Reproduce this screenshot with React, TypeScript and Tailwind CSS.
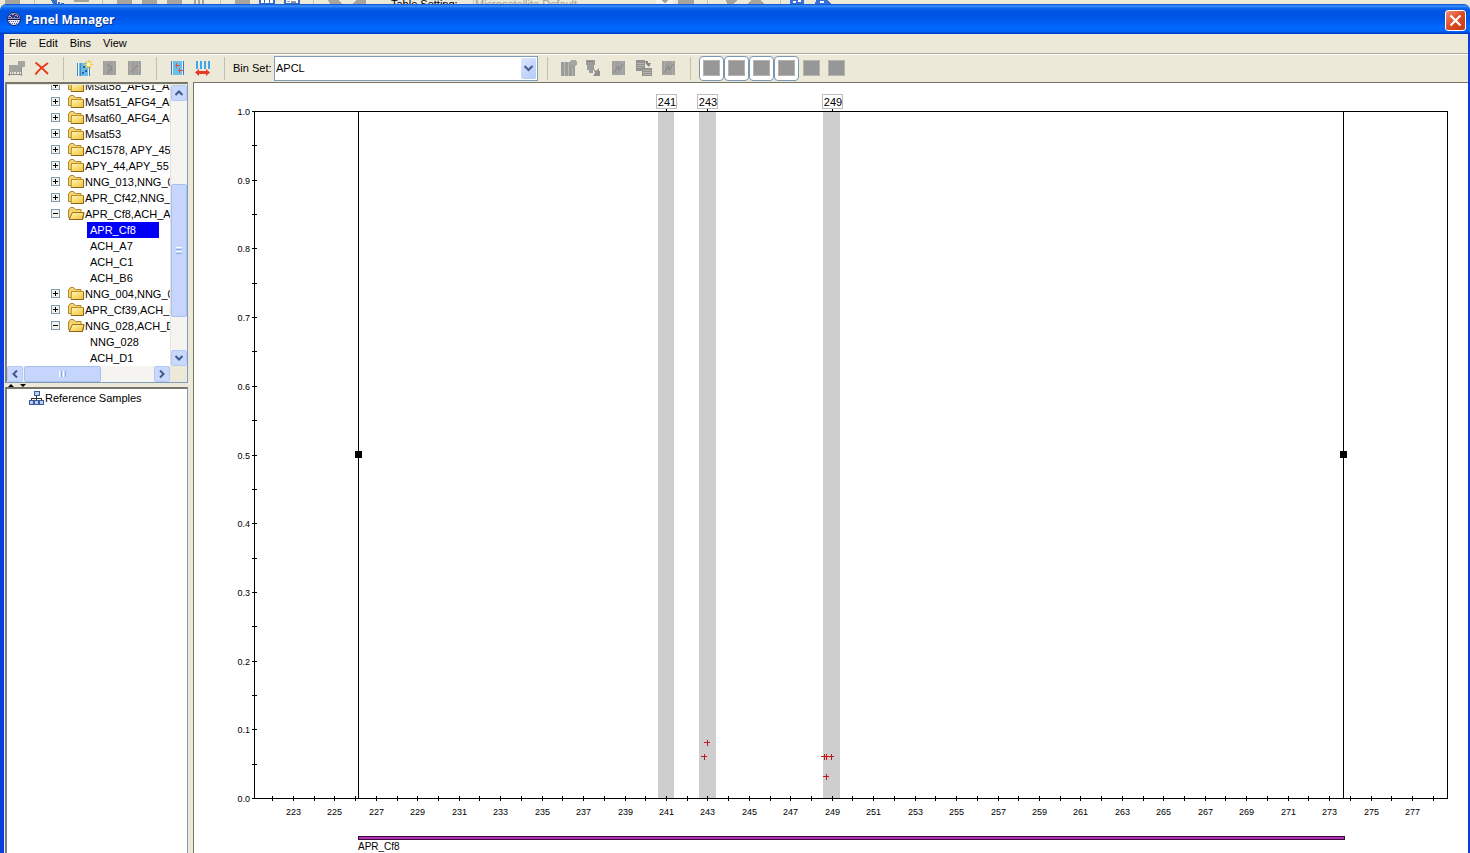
import React from "react";

type Node = { label: string; kind: "closed" | "open" | "leaf"; selected?: boolean };

const NODES: Node[] = [
  { label: "Msat58_AFG1_AFG2", kind: "closed" },
  { label: "Msat51_AFG4_AFG5", kind: "closed" },
  { label: "Msat60_AFG4_AFG5", kind: "closed" },
  { label: "Msat53", kind: "closed" },
  { label: "AC1578, APY_45", kind: "closed" },
  { label: "APY_44,APY_55", kind: "closed" },
  { label: "NNG_013,NNG_020", kind: "closed" },
  { label: "APR_Cf42,NNG_008", kind: "closed" },
  { label: "APR_Cf8,ACH_A7", kind: "open" },
  { label: "APR_Cf8", kind: "leaf", selected: true },
  { label: "ACH_A7", kind: "leaf" },
  { label: "ACH_C1", kind: "leaf" },
  { label: "ACH_B6", kind: "leaf" },
  { label: "NNG_004,NNG_006", kind: "closed" },
  { label: "APR_Cf39,ACH_D2", kind: "closed" },
  { label: "NNG_028,ACH_D1", kind: "open" },
  { label: "NNG_028", kind: "leaf" },
  { label: "ACH_D1", kind: "leaf" },
];

function Glyph({ children }: { children: React.ReactNode }) {
  return (
    <svg width="17" height="17" viewBox="0 0 17 17" className="shrink-0" shapeRendering="crispEdges" aria-hidden="true">
      {children}
    </svg>
  );
}

function Tool({ label, toggled, children }: { label: string; toggled?: boolean; children: React.ReactNode }) {
  return (
    <button
      aria-label={label}
      className={
        toggled
          ? "flex h-[25px] w-[25px] items-center justify-center rounded-[4px] border border-[#7a98af] bg-white"
          : "flex h-[25px] w-[25px] items-center justify-center"
      }
    >
      {children}
    </button>
  );
}

function Separator() {
  return (
    <div className="flex h-[23px] w-[18px] shrink-0 justify-center">
      <div className="w-px bg-[#c3bfae]" />
    </div>
  );
}

const Square = () => (
  <Glyph>
    <rect x="0" y="0" width="17" height="16" fill="#b4b3ae" />
    <rect x="1" y="1" width="15" height="14" fill="#979797" />
  </Glyph>
);

const GreyChart = ({ d }: { d: string }) => (
  <Glyph>
    <rect x="2" y="1" width="13" height="14" fill="#a0a09e" />
    <path d="M4.500 1v14M12.500 1v14" stroke="#adaca8" />
    <path d={d} stroke="#858585" fill="none" shapeRendering="auto" />
  </Glyph>
);

function Folder({ open }: { open: boolean }) {
  return (
    <svg width="17" height="16" viewBox="0 0 17 16" className="shrink-0" aria-hidden="true">
      <defs>
        <linearGradient id="folderFill" x1="0" y1="0" x2="1" y2="1">
          <stop offset="0" stopColor="#fffbb8" />
          <stop offset="1" stopColor="#f2bd35" />
        </linearGradient>
      </defs>
      <path d="M.500 11.500V4L2.500 1.500h3l2 2h5.500v8.500z" fill="#f5d36b" stroke="#b08428" />
      {open ? (
        <path d="M1 13.500L4.500 6.500H16L14.500 13.500z" fill="url(#folderFill)" stroke="#a07418" />
      ) : (
        <path d="M3.500 5.500H15.500V13.500H3z" fill="url(#folderFill)" stroke="#b98c2c" />
      )}
      <path d={open ? "M2 13.500H14.500L16 7" : "M3 13.500H15.500V6"} fill="none" stroke="#8a6418" />
    </svg>
  );
}

function Expander({ open }: { open: boolean }) {
  return (
    <svg width="9" height="9" viewBox="0 0 9 9" shapeRendering="crispEdges" className="mb-px shrink-0" aria-hidden="true">
      <rect x=".5" y=".5" width="8" height="8" fill="#f4f2ec" stroke="#7f9db0" />
      <path d={open ? "M2 4.500h5" : "M2 4.500h5M4.500 2v5"} stroke="#000" />
    </svg>
  );
}

function Tree() {
  return (
    <ul className="-mt-[7px] min-w-0 flex-1">
      {NODES.map((n) => (
        <li key={n.label + n.kind} className="flex h-4 items-center whitespace-nowrap">
          {n.kind === "leaf" ? (
            <button
              className={
                n.selected
                  ? "ml-20 h-4 w-[72px] bg-[#0000f8] pl-[3px] text-left text-white"
                  : "ml-20 h-4 w-[72px] pl-[3px] text-left"
              }
            >
              {n.label}
            </button>
          ) : (
            <button className="ml-11 flex h-4 items-center">
              <Expander open={n.kind === "open"} />
              <span className="ml-2 flex items-center">
                <Folder open={n.kind === "open"} />
                <span>{n.label}</span>
              </span>
            </button>
          )}
        </li>
      ))}
    </ul>
  );
}

function ScrollArrow({ label, d }: { label: string; d: string }) {
  return (
    <button
      aria-label={label}
      className="flex h-4 w-4 shrink-0 items-center justify-center rounded-[2px] border border-[#b4c8f6] bg-[#c9d8fc]"
    >
      <svg width="10" height="10" viewBox="0 0 10 10" aria-hidden="true">
        <path d={d} fill="none" stroke="#3f5a8a" strokeWidth="2" />
      </svg>
    </button>
  );
}

const SX = (v: number) => Math.round(99 + (v - 223) * 20.722) + 0.5;
const SY = (v: number) => Math.round(715 - v * 687) + 0.5;
const UNITS = Array.from({ length: 57 }, (_, i) => 222 + i);
const STEPS = Array.from({ length: 21 }, (_, i) => i / 20);
const BINS = [
  { name: "241", x: 464, w: 16, mid: 472.5 },
  { name: "243", x: 505, w: 17, mid: 513.5 },
  { name: "249", x: 629, w: 17, mid: 638.5 },
];
const PEAKS = [
  [513, 660],
  [510, 674],
  [630, 674],
  [632, 674],
  [637, 674],
  [632, 694],
];

function BinPlot() {
  return (
    <svg
      viewBox="0 0 1273 770"
      preserveAspectRatio="xMinYMin meet"
      className="block h-full w-full"
      role="img"
      aria-label="Bin plot for marker APR_Cf8"
    >
      <g shapeRendering="crispEdges">
        {BINS.map((b) => (
          <g key={b.name}>
            <rect x={b.x} y="28" width={b.w} height="687" fill="#cecece" />
            <path d={`M${b.mid} 26v3`} stroke="#000" />
            <rect x={b.mid - 10} y="11.500" width="20" height="14" fill="#fff" stroke="#bdbdbd" />
          </g>
        ))}
        <rect x="60.500" y="28.500" width="1193" height="687" fill="none" stroke="#000" />
        <path d="M164.500 28v687M1149.500 28v687" stroke="#000" />
        <rect x="161" y="368" width="7" height="7" />
        <rect x="1146" y="368" width="7" height="7" />
        {STEPS.map((s) => (
          <path key={s} d={`M58 ${SY(s)}h5`} stroke="#000" />
        ))}
        {UNITS.map((u) => (
          <path key={u} d={`M${SX(u)} 713v5`} stroke="#000" />
        ))}
        {PEAKS.map(([x, y]) => (
          <g key={`${x}-${y}`} fill="#c01818">
            <rect x={x - 3} y={y - 1} width="6" height="1" />
            <rect x={x - 0} y={y - 3} width="1" height="6" />
          </g>
        ))}
        <rect x="164.500" y="753.500" width="986" height="3" fill="#b432b4" stroke="#3c0a3c" />
      </g>
      <g fontSize="9" textAnchor="end">
        {STEPS.filter((_, i) => i % 2 === 0).map((s) => (
          <text key={s} x="56" y={SY(s) + 3}>
            {s.toFixed(1)}
          </text>
        ))}
      </g>
      <g fontSize="9" textAnchor="middle">
        {UNITS.filter((u) => u % 2 === 1).map((u) => (
          <text key={u} x={SX(u)} y="732">
            {u}
          </text>
        ))}
      </g>
      <g fontSize="11" textAnchor="middle">
        {BINS.map((b) => (
          <text key={b.name} x={b.mid + 0.5} y="23">
            {b.name}
          </text>
        ))}
      </g>
      <text x="164" y="767" fontSize="10">
        APR_Cf8
      </text>
    </svg>
  );
}

function BackgroundStrip() {
  return (
    <div className="flex h-1 shrink-0 overflow-hidden bg-[#ece9d8] leading-[8px]">
      <svg width="391" height="4" shapeRendering="crispEdges" className="shrink-0" aria-hidden="true">
        <path
          d="M5 0h15v4H5zM74 0h15v2H74zM117 0h15v4h-15zM142 0h15v4h-15zM167 0h15v4h-15zM194 0h2v4h-2zM198 0h2v4h-2zM202 0h2v4h-2zM235 0h15v4h-15zM328 0h10l4 4h-12zM352 4l4-4h10v4z"
          fill="#a5a49d"
        />
        <path d="M34 0h1v4h-1zM102 0h1v4h-1zM220 0h1v4h-1zM313 0h1v4h-1z" fill="#c3bfae" />
        <path d="M51 0h6v4h-4zM58 2h2v2h-2zM61 3h3v1h-3zM259 0h16v4h-16zM284 0h16v4h-16z" fill="#3a6fc8" />
        <path d="M261 0h3v3h-3zM265 0h4v3h-4zM270 0h3v3h-3zM286 0h12v3h-12z" fill="#fff" />
        <path d="M287 1h3v1h-3zM291 1h5v2h-5z" fill="#8899ad" />
      </svg>
      <span className="w-[82px] shrink-0">Table Setting:</span>
      <span className="w-[183px] shrink-0 border-l border-[#c9c7ba] pl-px text-[#a5a395]">Microsatellite Default</span>
      <svg width="190" height="4" shapeRendering="crispEdges" className="shrink-0" aria-hidden="true">
        <path d="M0 0h17v4H0z" fill="#f5f4ee" />
        <path d="M5 0l4 3l4-3M22 0h16v4H22zM70 0h11l-3 4h-7zM95 0h10l3 4H92z" fill="#a5a49d" />
        <path d="M51 0h1v4h-1zM124 0h1v4h-1z" fill="#c3bfae" />
        <path d="M134 0h14v4h-14zM160 0h12l3 4h-16z" fill="#3a6fd8" />
        <path d="M137 1h3v2h-3zM142 0h3v2h-3zM164 1h4v2h-4z" fill="#fff" />
      </svg>
    </div>
  );
}

export default function App() {
  return (
    <div className="flex h-screen flex-col overflow-hidden bg-[#ece9d8] font-['Liberation_Sans',Arial,sans-serif] text-[11px] leading-4 text-black">
      <BackgroundStrip />
      <div className="flex min-h-0 flex-1 flex-col">
        <header className="flex h-[30px] shrink-0 items-center rounded-t-[6px] bg-[linear-gradient(#0a48c8_0px,#3b93ff_2px,#1268ee_4px,#0054e3_7px,#0056e8_15px,#0068ff_23px,#0066fc_27px,#0038b8_30px)] pr-1 pl-[7px]">
          <svg width="14" height="14" viewBox="0 0 14 14" aria-hidden="true">
            <circle cx="7" cy="7" r="6.500" fill="#e8ecf8" stroke="#17205c" />
            <path d="M1 6.500C2 3 4 1.500 7 1.500S12 3 13 6.500z" fill="#26357e" />
            <path d="M2 4.500h2M5 2.500h2M8 3.500h2M10 4.500h1M4 5.500h1M7 5.500h1" stroke="#c8a0c8" />
            <path d="M1 7.500h12" stroke="#101a50" />
            <path d="M2 9.500h10M3 11.500h8" stroke="#5866a8" strokeDasharray="1 1" />
          </svg>
          <h1 className="mt-0.5 ml-1 font-['Open_Sans',sans-serif] text-[12px] font-bold text-white [text-shadow:1px_1px_0_#0a2f8c]">
            Panel Manager
          </h1>
          <button
            aria-label="Close"
            className="mt-[3px] ml-auto flex h-[21px] w-[21px] items-center justify-center rounded-[3px] border border-white bg-[linear-gradient(135deg,#f0937a,#dd4a23_50%,#c63a12)]"
          >
            <svg width="13" height="13" viewBox="0 0 13 13" aria-hidden="true">
              <path d="M1.500 1.500l10 10M11.500 1.500l-10 10" stroke="#fff" strokeWidth="2.200" />
            </svg>
          </button>
        </header>

        <div className="flex min-h-0 flex-1 flex-col border-r-2 border-l-4 border-r-[#0a3fd0] border-l-[#0a3fe0]">
          <nav className="flex h-5 shrink-0 items-center gap-3 border-b border-[#aca899] pb-0.5 pl-[5px]">
            <button>File</button>
            <button>Edit</button>
            <button>Bins</button>
            <button>View</button>
          </nav>

          <div className="flex h-7 shrink-0 items-center border-t border-white pb-px">
            <Tool label="New panel">
              <Glyph>
                <path d="M1 5h12v7H1z" fill="#a3a29e" />
                <path d="M10 1h7v6h-7z" fill="#a6a5a1" />
                <path d="M3 12v2M5 12v2M8 12v2M11 12v2" stroke="#a3a29e" />
                <path d="M0 14.500h14M1.500 12v4M13.500 7v9" stroke="#8c8c8c" />
              </Glyph>
            </Tool>
            <Tool label="Delete">
              <svg width="17" height="17" viewBox="0 0 17 17" aria-hidden="true">
                <path d="M2.500 2.500C6 5 12 11 15 14" stroke="#e63a1e" strokeWidth="2" fill="none" />
                <path d="M15 3C11 6 5 10 2.500 14.500" stroke="#e63a1e" strokeWidth="2" fill="none" />
              </svg>
            </Tool>
            <Separator />
            <Tool label="New marker">
              <Glyph>
                <rect x="1" y="3" width="12" height="13" fill="#69bce8" />
                <path d="M2.500 3v13M12.500 6v10" stroke="#e6f6ff" />
                <path d="M1.500 3v13M4.500 3v13M13.500 6v10" stroke="#4a86b8" />
                <path d="M7 6h2v2H7zM6 12h2v2H6zM9 10h2v2H9z" fill="#2c5ca8" />
                <path d="M12.500 0v9M8 4.500h9M9.500 1.500l6 6M15.500 1.500l-6 6" stroke="#f4c92e" strokeWidth="1.200" shapeRendering="auto" />
                <circle cx="12.500" cy="4.500" r="2" fill="#fffbd0" shapeRendering="auto" />
              </Glyph>
            </Tool>
            <Tool label="Import marker"><GreyChart d="M6 4l5 4l-5 5M8 10h4" /></Tool>
            <Tool label="Edit marker"><GreyChart d="M5 12l4-4l3-3" /></Tool>
            <Separator />
            <Tool label="Show marker plot">
              <Glyph>
                <rect x="2" y="1" width="13" height="14" fill="#69c0ea" />
                <path d="M3.500 1v14M13.500 1v14" stroke="#e2f4ff" />
                <path d="M2.500 1v14M14.500 1v14" stroke="#5a6fa8" />
                <path d="M5.500 5.500h5M7.500 3v5M8.500 10.500h5M10.500 8v5" stroke="#df5444" />
              </Glyph>
            </Tool>
            <Tool label="Show bins">
              <Glyph>
                <path d="M3 1v8M7 1v8M11 1v8M15 1v8" stroke="#3fa6ea" strokeWidth="2" />
                <path d="M1 12.500l4-3.500v2h7v-2l4 3.500l-4 3.500v-2H5v2z" fill="#e93a2a" shapeRendering="auto" />
              </Glyph>
            </Tool>
            <Separator />
            <label htmlFor="bin-set" className="w-[41px] shrink-0 whitespace-nowrap">
              Bin Set:
            </label>
            <div className="relative w-[264px] shrink-0">
              <select
                id="bin-set"
                className="block h-[25px] w-full appearance-none border border-[#7f9db9] bg-white pl-px"
                defaultValue="APCL"
              >
                <option>APCL</option>
              </select>
              <span className="pointer-events-none absolute top-[2px] right-[2px] flex h-[21px] w-[15px] items-center justify-center rounded-[2px] bg-[linear-gradient(135deg,#dbe6ff,#b4c9f6)]">
                <svg width="9" height="7" viewBox="0 0 9 7" aria-hidden="true">
                  <path d="M.500 1l4 4l4-4" fill="none" stroke="#45618f" strokeWidth="2.200" />
                </svg>
              </span>
            </div>
            <Separator />
            <Tool label="New bin">
              <Glyph>
                <path d="M1 2h14v14H1z" fill="#9c9c9a" />
                <path d="M4.500 2v14M8.500 2v14M12.500 8v8" stroke="#b9b8b2" />
                <path d="M10 0h7v6h-7z" fill="#a6a5a1" />
                <path d="M10 0h1v1h-1zM16 0h1v1h-1zM16 5h1v1h-1z" fill="#ece9d8" />
              </Glyph>
            </Tool>
            <Tool label="Auto bin">
              <Glyph>
                <path d="M1 0h9v5H1zM2 5h7v5H2zM4 10h4v3H4z" fill="#9b9b99" />
                <path d="M2 1.500h7" stroke="#858585" />
                <path d="M8 8l3 3l3-3v3h1v5H8l2-3z" fill="#8f8f8e" shapeRendering="auto" />
              </Glyph>
            </Tool>
            <Tool label="Edit bins"><GreyChart d="M4 13l4-7l1 4l4-6" /></Tool>
            <Tool label="Copy bins">
              <Glyph>
                <path d="M1 0h9v11H1zM7 8h10v8H7z" fill="#929290" />
                <path d="M2 3.500h7M2 5.500h7M2 7.500h5M8 10.500h8M8 12.500h8M8 14.500h8" stroke="#b5b4ae" />
                <path d="M10 1h3v2h3l-2 4l-3-3z" fill="#858585" shapeRendering="auto" />
              </Glyph>
            </Tool>
            <Tool label="Delete bins"><GreyChart d="M4 13l4-7l1 4l4-6" /></Tool>
            <Separator />
            <Tool label="Display option 1" toggled><Square /></Tool>
            <Tool label="Display option 2" toggled><Square /></Tool>
            <Tool label="Display option 3" toggled><Square /></Tool>
            <Tool label="Display option 4" toggled><Square /></Tool>
            <Tool label="Display option 5"><Square /></Tool>
            <Tool label="Display option 6"><Square /></Tool>
          </div>

          <div className="flex min-h-0 flex-1">
            <aside className="flex w-[184px] shrink-0 flex-col pl-px">
              <section className="flex h-[301px] shrink-0 flex-col border-t-2 border-r border-b border-l-2 border-t-[#77756a] border-r-[#7f9db9] border-b-[#7f9db9] border-l-[#77818c] pt-px">
                <div className="flex h-[281px] shrink-0 overflow-hidden bg-white">
                  <div className="min-w-0 flex-1 overflow-hidden">
                    <Tree />
                  </div>
                  <div className="flex w-[17px] shrink-0 flex-col border-l border-[#e4e2da] bg-[#f5f4f0]">
                    <ScrollArrow label="Scroll up" d="M1.500 7L5 3.500L8.500 7" />
                    <div className="h-[83px]" />
                    <div className="flex h-[133px] flex-col items-center justify-center gap-px rounded-[2px] border border-[#a9bff0] bg-[#c6d5fc]">
                      <i className="h-px w-1.5 bg-white" />
                      <i className="h-px w-1.5 bg-[#8fabe8]" />
                      <i className="h-px w-1.5 bg-white" />
                      <i className="h-px w-1.5 bg-[#8fabe8]" />
                    </div>
                    <div className="flex-1" />
                    <ScrollArrow label="Scroll down" d="M1.500 3L5 6.500L8.500 3" />
                  </div>
                </div>
                <div className="flex min-h-0 flex-1">
                  <div className="flex flex-1 items-center bg-[#f5f4f0]">
                    <ScrollArrow label="Scroll left" d="M7 1.500L3.500 5L7 8.500" />
                    <div className="ml-px flex h-4 w-[77px] items-center justify-center gap-px rounded-[2px] border border-[#a9bff0] bg-[#c6d5fc]">
                      <i className="h-1.5 w-px bg-white" />
                      <i className="h-1.5 w-px bg-[#8fabe8]" />
                      <i className="h-1.5 w-px bg-white" />
                      <i className="h-1.5 w-px bg-[#8fabe8]" />
                    </div>
                    <div className="flex-1" />
                    <ScrollArrow label="Scroll right" d="M3 1.500L6.500 5L3 8.500" />
                  </div>
                  <div className="w-[17px]" />
                </div>
              </section>
              <div className="flex h-1 shrink-0 items-center pl-[3px]">
                <svg width="18" height="3" viewBox="0 0 18 3" aria-hidden="true">
                  <path d="M0 3l3-3l3 3zM12 0h6l-3 3z" />
                </svg>
              </div>
              <section className="min-h-0 flex-1 border-t-2 border-r border-l-2 border-t-[#77756a] border-r-[#7f9db9] border-l-[#77818c] bg-white pt-px">
                <button className="ml-[22px] flex h-4 items-center">
                  <svg width="16" height="16" viewBox="0 0 16 16" shapeRendering="crispEdges" aria-hidden="true">
                    <path d="M7.500 6v4M2.500 11V8.500h10V11M7.500 8v3" fill="none" stroke="#333" />
                    <rect x="5.500" y="1.500" width="5" height="4" fill="#b9d0f4" stroke="#3a5a98" />
                    <rect x=".5" y="10.500" width="4" height="4" fill="#b9d0f4" stroke="#3a5a98" />
                    <rect x="5.500" y="10.500" width="4" height="4" fill="#b9d0f4" stroke="#3a5a98" />
                    <rect x="10.500" y="10.500" width="4" height="4" fill="#b9d0f4" stroke="#3a5a98" />
                  </svg>
                  <span>Reference Samples</span>
                </button>
              </section>
            </aside>
            <main className="ml-[5px] min-w-0 flex-1 border-t border-l border-[#77756a] bg-white">
              <BinPlot />
            </main>
          </div>
        </div>
      </div>
    </div>
  );
}
